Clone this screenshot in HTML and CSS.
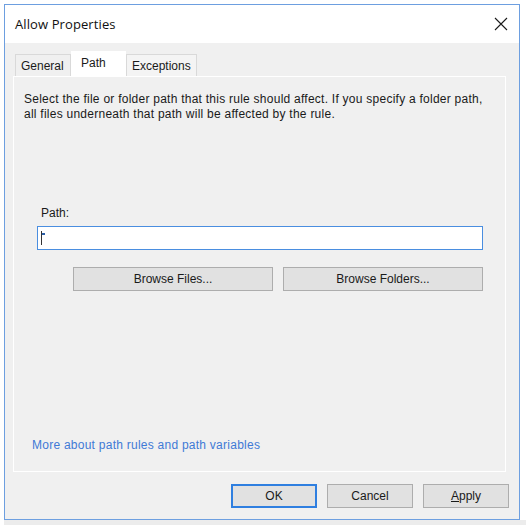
FILE: index.html
```html
<!DOCTYPE html>
<html lang="en">
<head>
  <meta charset="UTF-8" />
  <title>Allow Properties</title>
  <link rel="stylesheet" href="styles.css">
</head>
<body>
  <div class="desk">
    <div class="window">
      <div class="titlebar">
        <span class="title">Allow Properties</span>
        <svg class="close" width="14" height="14" viewBox="0 0 14 14">
          <path d="M1 1 L13 13 M13 1 L1 13" stroke="#1a1a1a" stroke-width="1.1" fill="none"/>
        </svg>
      </div>

      <div class="client">
        <div class="tabs">
          <div class="tab">General</div>
          <div class="tab selected">Path</div>
          <div class="tab">Exceptions</div>
        </div>

        <div class="panel">
          <p class="intro">
            Select the file or folder path that this rule should affect. If you specify a folder path,<br>
            all files underneath that path will be affected by the rule.
          </p>

          <div class="field-label">Path:</div>
          <div class="path-input">
            <span class="caret"></span>
          </div>

          <div class="browse-row">
            <button class="btn browse">Browse Files...</button>
            <button class="btn browse">Browse Folders...</button>
          </div>

          <a class="help-link" href="#">More about path rules and path variables</a>
        </div>

        <div class="actions">
          <button class="btn action default">OK</button>
          <button class="btn action">Cancel</button>
          <button class="btn action"><u>A</u>pply</button>
        </div>
      </div>
    </div>
    <div class="desk-bottom"></div>
  </div>
</body>
</html>
```

FILE: styles.css
```css
html, body {
  margin: 0;
  padding: 0;
}

body {
  width: 526px;
  height: 525px;
  overflow: hidden;
  background: #fff;
  font-family: 'Liberation Sans', Arial, sans-serif;
  font-size: 12px;
  color: #1a1a1a;
}

.desk {
  padding: 4px 0 0 4px;
}

.window {
  width: 514px;
  height: 514px;
  border: 1px solid #6d9fe0;
  display: flex;
  flex-direction: column;
  background: #f0f0f0;
}

.titlebar {
  height: 38px;
  background: #fff;
  display: flex;
  align-items: center;
  justify-content: space-between;
  padding: 0 11px 0 10px;
}

.title {
  font-family: 'Open Sans', 'Noto Sans', sans-serif;
  font-size: 13px;
  letter-spacing: 0.1px;
  color: #111;
  margin-top: -1px;
}

.close {
  margin-top: 0;
}

.client {
  flex: 1;
  display: flex;
  flex-direction: column;
  padding: 8px 11px 10px 8px;
}

.tabs {
  display: flex;
  align-items: flex-end;
  height: 25px;
  padding-left: 2px;
}

.tab {
  height: 22px;
  line-height: 22px;
  padding: 0 5px;
  border: 1px solid #d9d9d9;
  border-bottom: none;
  background: #f0f0f0;
  font-size: 12px;
  color: #1a1a1a;
  box-sizing: border-box;
}

.tab:first-child {
  width: 56px;
}

.tab.selected {
  width: 55px;
  height: 25px;
  line-height: 22px;
  background: #fff;
  border-color: #fff;
  padding-left: 9px;
}

.tab:last-child {
  width: 71px;
  background: #f4f4f4;
}

.panel {
  width: 493px;
  height: 396px;
  box-sizing: border-box;
  border: 1px solid #fff;
  display: flex;
  flex-direction: column;
}

.intro {
  margin: 15px 8px 0 10px;
  line-height: 15px;
  height: 30px;
  letter-spacing: 0.25px;
  white-space: nowrap;
}

.field-label {
  margin: 84px 0 0 27px;
  line-height: 14px;
}

.path-input {
  margin: 6px 0 0 23px;
  width: 446px;
  height: 24px;
  box-sizing: border-box;
  border: 1px solid #4a8ee0;
  background: #fff;
  position: relative;
}

.caret {
  position: absolute;
  left: 3px;
  top: 4px;
  width: 1px;
  height: 14px;
  background: #333;
}

.caret::after {
  content: "";
  position: absolute;
  left: 1px;
  top: 2px;
  width: 3px;
  height: 2px;
  background: #2a5ea8;
}

.browse-row {
  display: flex;
  gap: 10px;
  margin: 17px 0 0 59px;
}

.btn {
  font-family: 'Liberation Sans', Arial, sans-serif;
  font-size: 12px;
  color: #1a1a1a;
  background: #e1e1e1;
  border: 1px solid #adadad;
  padding: 0;
  height: 24px;
  box-sizing: border-box;
}

.browse {
  width: 200px;
}

.help-link {
  margin: auto 0 19px 18px;
  color: #3f7ad6;
  text-decoration: none;
  line-height: 14px;
  letter-spacing: 0.25px;
}

.actions {
  display: flex;
  justify-content: flex-end;
  gap: 10px;
  margin-top: 12px;
  margin-right: -1px;
}

.action {
  width: 86px;
}

.action.default {
  border: 2px solid #2f7fe0;
}

.desk-bottom {
  height: 6px;
  background: #ececec;
}
```
